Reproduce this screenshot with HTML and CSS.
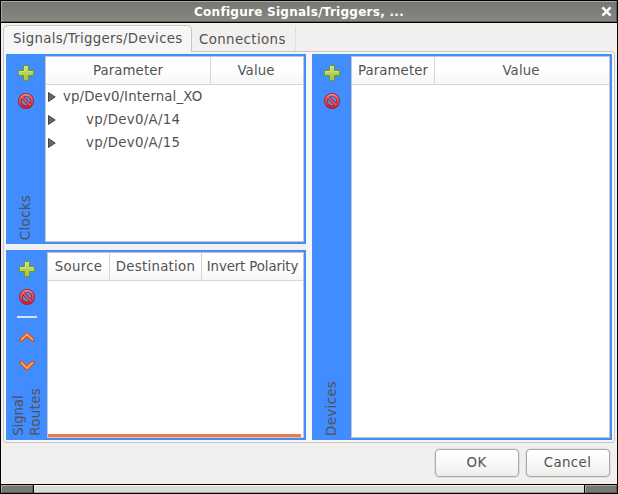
FILE: index.html
```html
<!DOCTYPE html>
<html lang="en">
<head>
<meta charset="utf-8">
<title>Configure Signals/Triggers</title>
<link rel="stylesheet" href="styles.css">
</head>
<body>
<svg class="defs" width="0" height="0" aria-hidden="true">
  <defs>
    <linearGradient id="green" x1="0" y1="0" x2="0" y2="1"><stop offset="0" stop-color="#cfe07c"/><stop offset="1" stop-color="#a3c43a"/></linearGradient>
    <linearGradient id="red" x1="0" y1="0" x2="0" y2="1"><stop offset="0" stop-color="#ee8080"/><stop offset="1" stop-color="#d0202c"/></linearGradient>
    <symbol id="add" viewBox="0 0 16 16"><path d="M5.5 .5h5v5h5v5h-5v5h-5v-5h-5v-5h5z" fill="url(#green)" stroke="#6b9b1e"/><path d="M6.5 6.5v-5h3M1.5 9.5v-3h5M10 6.5h4.500" fill="none" stroke="#dcea9c" stroke-opacity=".7"/></symbol>
    <symbol id="remove" viewBox="0 0 16 16"><circle cx="8" cy="8" r="6.200" fill="#5c8fe0" stroke="#a51d2d" stroke-width="3.600"/><path d="M4 4l8 8" stroke="#a51d2d" stroke-width="3.200"/><circle cx="8" cy="8" r="6.200" fill="none" stroke="url(#red)" stroke-width="2"/><path d="M4 4l8 8" stroke="#e4626a" stroke-width="1.700"/></symbol>
    <symbol id="up" viewBox="0 0 16 16"><path d="M2.500 10.700L8 5.400l5.500 5.300" fill="none" stroke="#d94a10" stroke-width="4" stroke-linecap="round" stroke-linejoin="round"/><path d="M2.500 10.600L8 5.300l5.500 5.300" fill="none" stroke="#fba55c" stroke-width="1.900" stroke-linecap="round"/></symbol>
    <symbol id="down" viewBox="0 0 16 16"><path d="M2.500 5.900L8 11.200l5.500-5.300" fill="none" stroke="#d94a10" stroke-width="4" stroke-linecap="round" stroke-linejoin="round"/><path d="M2.500 5.800L8 11.100l5.500-5.300" fill="none" stroke="#fba55c" stroke-width="1.900" stroke-linecap="round"/></symbol>
    <symbol id="expand" viewBox="0 0 8 10"><path d="M.5.500v9l6.700-4.500z" fill="#66696a" stroke="#454849"/></symbol>
  </defs>
</svg>
<div class="window">
  <header class="titlebar">
    <span class="title">Configure Signals/Triggers, ...</span>
    <svg class="close" viewBox="0 0 10 10"><path d="M1.300 1.300l7.400 7.400M8.700 1.300L1.300 8.700" stroke="#fff" stroke-width="2.300"/></svg>
  </header>
  <main class="content">
    <nav class="tabs">
      <div class="tab active"><span>Signals/Triggers/Devices</span></div>
      <div class="tab"><span>Connections</span></div>
    </nav>
    <div class="page">
      <div class="column">
        <section class="panel">
          <div class="tools">
            <svg class="icon"><use href="#add"/></svg>
            <svg class="icon"><use href="#remove"/></svg>
            <div class="label">Clocks</div>
          </div>
          <div class="table">
            <div class="head clocks"><span>Parameter</span><span>Value</span></div>
            <div class="row root"><svg class="arrow"><use href="#expand"/></svg><span>vp/Dev0/Internal_XO</span></div>
            <div class="row child"><svg class="arrow"><use href="#expand"/></svg><span>vp/Dev0/A/14</span></div>
            <div class="row child"><svg class="arrow"><use href="#expand"/></svg><span>vp/Dev0/A/15</span></div>
          </div>
        </section>
        <section class="panel routes">
          <div class="tools">
            <svg class="icon"><use href="#add"/></svg>
            <svg class="icon"><use href="#remove"/></svg>
            <div class="separator"></div>
            <svg class="icon"><use href="#up"/></svg>
            <svg class="icon"><use href="#down"/></svg>
            <div class="label"><span class="tight">Signal</span><br>Routes</div>
          </div>
          <div class="table">
            <div class="head signal"><span>Source</span><span>Destination</span><span class="tight">Invert Polarity</span></div>
            <div class="scroll"></div>
          </div>
        </section>
      </div>
      <section class="panel">
        <div class="tools">
          <svg class="icon"><use href="#add"/></svg>
          <svg class="icon"><use href="#remove"/></svg>
          <div class="label">Devices</div>
        </div>
        <div class="table">
          <div class="head devices"><span>Parameter</span><span>Value</span></div>
        </div>
      </section>
    </div>
    <div class="actions"><button>OK</button><button>Cancel</button></div>
  </main>
  <footer class="grip"><i class="dark"></i><i></i><i class="dark"></i></footer>
</div>
</body>
</html>
```
FILE: styles.css
```css
* { box-sizing: border-box; }
body { margin: 0; font: 13.33px/16px "DejaVu Sans", sans-serif; color: #525252; }
.defs { position: absolute; }
.window { width: 618px; height: 494px; background: #000; padding: 1px; display: flex; flex-direction: column; overflow: hidden; }
.titlebar { height: 21px; flex: none; margin-bottom: 1px; display: flex; align-items: center; position: relative; background: linear-gradient(#777872, #868780); border: 1px solid #5c5d58; border-top-color: #a9aaa5; border-left-color: #a9aaa5; }
.title { flex: 1; margin-left: -18px; padding-left: 13px; text-align: center; color: #fff; font-size: 12px; font-weight: bold; letter-spacing: .27px; }
.close { width: 11px; height: 11px; margin-right: 4px; }
.content { height: 461px; flex: none; background: #f1f0ee; padding: 2px 2px 0; }
.tabs { display: flex; height: 27px; position: relative; z-index: 1; letter-spacing: .4px; }
.tab { width: 104px; height: 25px; margin-top: 1px; padding: 6px 0 0 7px; border-right: 1px solid #e0dfdd; white-space: nowrap; }
.tab.active { width: 189px; height: 27px; margin-top: 0; padding: 5px 0 0 9px; background: #f6f6f6; border: 1px solid #c9c5c0; border-bottom: 0; border-radius: 5px 5px 0 0; letter-spacing: .3px; }
.page { width: 612px; height: 392px; margin-top: -1px; padding: 2px; display: flex; gap: 6px; background: #f6f6f6; border: 1px solid #c9c5c0; border-radius: 0 4px 3px 3px; }
.column { width: 300px; display: flex; flex-direction: column; gap: 6px; background: #f1f0ee; }
.panel { width: 300px; flex: 1; display: flex; background: #418cff; padding: 2px 2px 2px 0; }
.column .panel { flex: none; height: 190px; }
.tools { width: 39px; display: flex; flex-direction: column; align-items: center; padding: 9px 0 2px; gap: 12px; }
.routes .tools { width: 41px; }
.icon { width: 16px; height: 16px; flex: none; margin-left: 1px; }
.separator { width: 20px; height: 2px; margin: -1px 0 -1px 1px; background: #dcdfe4; }
.label { margin-top: auto; writing-mode: vertical-rl; transform: rotate(180deg); line-height: 18px; letter-spacing: .35px; }
.routes .label { line-height: 17px; margin-left: 1px; }
.table { flex: 1; background: #fff; border: 1px solid #c9c5c0; display: flex; flex-direction: column; }
.head { display: grid; height: 28px; border-bottom: 1px solid #d8d5d2; background: linear-gradient(#fff 40%, #f7f7f8); line-height: 27px; text-align: center; white-space: nowrap; letter-spacing: .1px; }
.head span + span { border-left: 1px solid #d8d5d2; }
.head span:last-child { padding-right: 2px; }
.clocks { grid-template-columns: 164px 1fr; }
.devices { grid-template-columns: 82px 1fr; }
.signal { grid-template-columns: 61px 92px 1fr; letter-spacing: .27px; }
.tight { letter-spacing: -.12px; }
.signal span:last-child { padding: 0; }
.row { height: 23px; display: flex; align-items: center; padding-left: 2px; }
.root { letter-spacing: .12px; }
.arrow { width: 8px; height: 10px; margin-right: 7px; }
.child { letter-spacing: .3px; }
.child .arrow { margin-right: 30px; }
.scroll { margin: auto 2px 0 0; height: 3px; background: #ef7947; }
.actions { display: flex; justify-content: flex-end; gap: 7px; padding: 6px 5px 0; }
button { width: 84px; height: 28px; padding: 0 1px 1px 0; font: inherit; color: inherit; letter-spacing: .4px; background: linear-gradient(#fff, #f9f9f9 50%, #eeedec); border: 1px solid #aaa9a7; border-radius: 4px; box-shadow: 0 0 0 .5px #d0cfcd; }
.grip { height: 8px; margin-top: 1px; display: flex; gap: 1px; }
.grip i { flex: 1; background: #dcddd6; border-top: 1px solid #fff; border-bottom: 1px solid #a5a69f; }
.grip .dark { flex: 0 0 32px; background: #777872; border: 1px solid #5c5d58; border-top-color: #a9aaa5; border-left-color: #a9aaa5; }
```
